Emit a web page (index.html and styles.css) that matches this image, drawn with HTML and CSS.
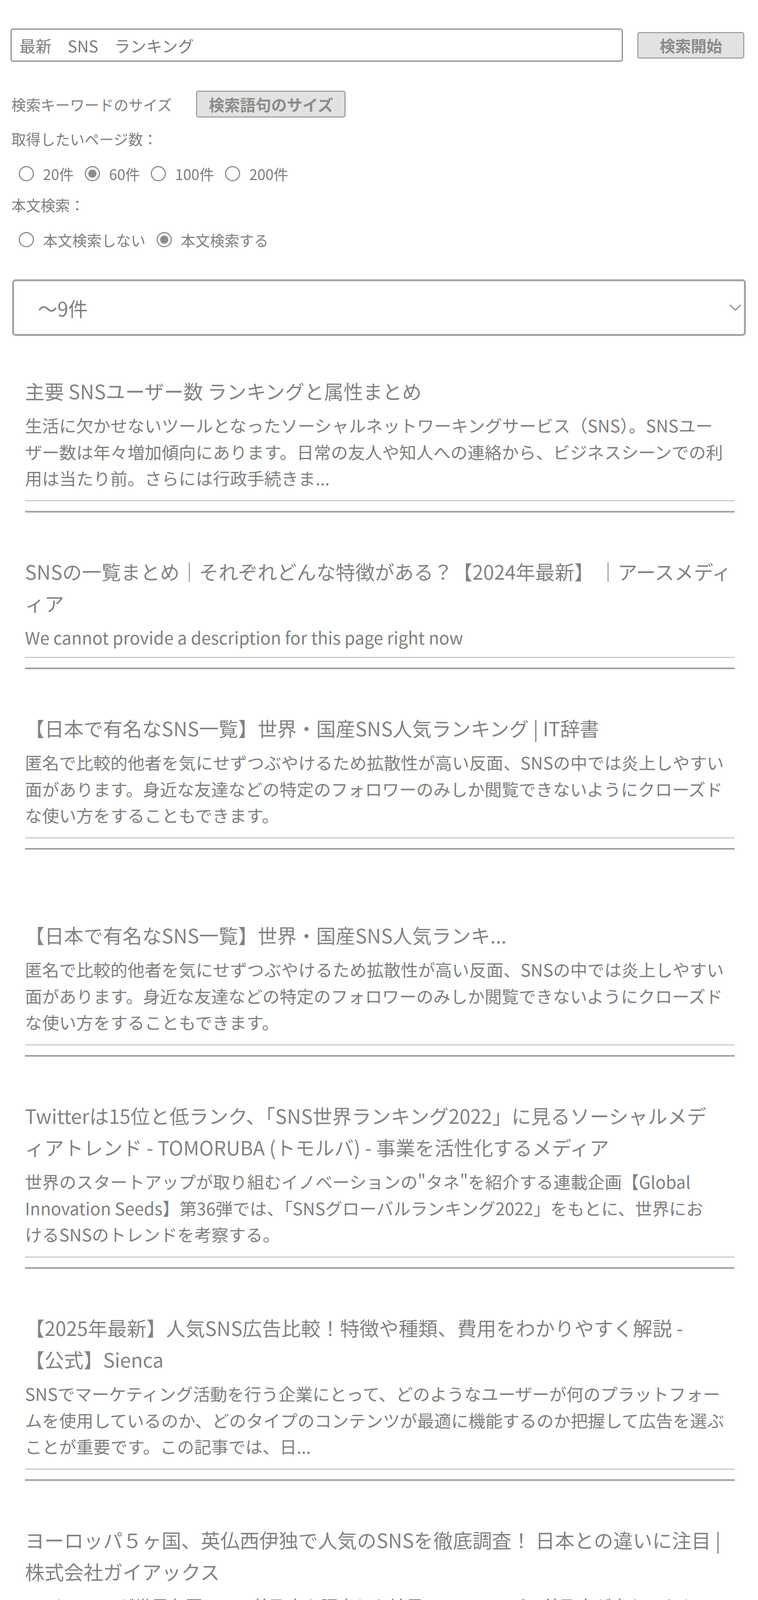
FILE: index.html
```html
<!DOCTYPE html>
<html lang="ja">
<head>
<meta charset="utf-8">
<title>SNS ランキング 検索</title>
<link rel="stylesheet" href="styles.css">
</head>
<body>
<div class="page">
  <form class="search-row">
    <input class="search-input" type="text" value="最新　SNS　ランキング">
    <button class="btn btn-search" type="button">検索開始</button>
  </form>

  <div class="size-row">
    <span class="label">検索キーワードのサイズ</span>
    <button class="btn btn-size" type="button">検索語句のサイズ</button>
  </div>

  <div class="label label-block">取得したいページ数：</div>
  <div class="radio-row">
    <label class="opt"><input class="radio" type="radio" name="count">20件</label>
    <label class="opt"><input class="radio" type="radio" name="count" checked>60件</label>
    <label class="opt"><input class="radio" type="radio" name="count">100件</label>
    <label class="opt"><input class="radio" type="radio" name="count">200件</label>
  </div>

  <div class="label label-block label-body">本文検索：</div>
  <div class="radio-row">
    <label class="opt"><input class="radio" type="radio" name="body">本文検索しない</label>
    <label class="opt"><input class="radio" type="radio" name="body" checked>本文検索する</label>
  </div>

  <div class="select">
    <span class="select-text">～9件</span>
    <svg class="chevron" width="30" height="17" viewBox="0 0 30 17"><path d="M2 2 L15 15 L28 2" fill="none" stroke="#8a8a8a" stroke-width="3" stroke-linecap="round" stroke-linejoin="round"/></svg>
  </div>

  <div class="results">
    <div class="item">
      <div class="title">主要 SNSユーザー数 ランキングと属性まとめ</div>
      <p class="desc">生活に欠かせないツールとなったソーシャルネットワーキングサービス（SNS）。SNSユー<br>ザー数は年々増加傾向にあります。日常の友人や知人への連絡から、ビジネスシーンでの利<br>用は当たり前。さらには行政手続きま...</p>
      <div class="rule"></div>
      <hr class="sep">
    </div>

    <div class="item">
      <div class="title">SNSの一覧まとめ｜それぞれどんな特徴がある？【2024年最新】 ｜アースメディ<br>ィア</div>
      <p class="desc desc-short">We cannot provide a description for this page right now</p>
      <div class="rule"></div>
      <hr class="sep">
    </div>

    <div class="item">
      <div class="title">【日本で有名なSNS一覧】世界・国産SNS人気ランキング | IT辞書</div>
      <p class="desc">匿名で比較的他者を気にせずつぶやけるため拡散性が高い反面、SNSの中では炎上しやすい<br>面があります。身近な友達などの特定のフォロワーのみしか閲覧できないようにクローズド<br>な使い方をすることもできます。</p>
      <div class="rule"></div>
      <hr class="sep">
    </div>

    <div class="item item-spaced">
      <div class="title">【日本で有名なSNS一覧】世界・国産SNS人気ランキ...</div>
      <p class="desc">匿名で比較的他者を気にせずつぶやけるため拡散性が高い反面、SNSの中では炎上しやすい<br>面があります。身近な友達などの特定のフォロワーのみしか閲覧できないようにクローズド<br>な使い方をすることもできます。</p>
      <div class="rule"></div>
      <hr class="sep">
    </div>

    <div class="item">
      <div class="title">Twitterは15位と低ランク、「SNS世界ランキング2022」に見るソーシャルメデ<br>ィアトレンド - TOMORUBA (トモルバ) - 事業を活性化するメディア</div>
      <p class="desc">世界のスタートアップが取り組むイノベーションの"タネ"を紹介する連載企画【Global<br>Innovation Seeds】第36弾では、「SNSグローバルランキング2022」をもとに、世界にお<br>けるSNSのトレンドを考察する。</p>
      <div class="rule"></div>
      <hr class="sep">
    </div>

    <div class="item">
      <div class="title">【2025年最新】人気SNS広告比較！特徴や種類、費用をわかりやすく解説 -<br>【公式】Sienca</div>
      <p class="desc">SNSでマーケティング活動を行う企業にとって、どのようなユーザーが何のプラットフォー<br>ムを使用しているのか、どのタイプのコンテンツが最適に機能するのか把握して広告を選ぶ<br>ことが重要です。この記事では、日...</p>
      <div class="rule"></div>
      <hr class="sep">
    </div>

    <div class="item">
      <div class="title">ヨーロッパ５ヶ国、英仏西伊独で人気のSNSを徹底調査！ 日本との違いに注目 |<br>株式会社ガイアックス</div>
      <p class="desc">Statista Inc.が世界各国のSNS普及率を調査した結果、ヨーロッパで普及率が高かったトッ<br>プ5はイギリスの64%、フランスの56%、スペインの54%、イタリアの52%、ドイツの41%<br>でした。 SNSの普及率が高かった5ヶ国の「ユーザー数...</p>
      <div class="rule"></div>
      <hr class="sep">
    </div>

    <div class="item">
      <div class="title">【2023年】世界で人気のソーシャルメディアまとめ | 株式会社bibin</div>
      <p class="desc">Facebookは2006年9月26日に公開されたものであり、SNSの存在を世に知らしめた存在の<br>代表的なサービスです。当時、ハーバード大学生のマーク・ザッカーバーグが友人とともに<br>創業しました。</p>
      <div class="rule"></div>
      <hr class="sep">
    </div>
  </div>
</div>
</body>
</html>
```

FILE: styles.css
```css
html {
  background: #ffffff;
}

body {
  margin: 0;
  font-family: "Noto Sans CJK JP", "Noto Sans", "Liberation Sans", sans-serif;
  color: #808080;
  background: #ffffff;
}

.page {
  padding: 0 31px 0 27px;
}

/* search row */
.search-row {
  display: flex;
  align-items: center;
  margin: 73px 0 0 0;
  height: 85px;
}

.search-input {
  box-sizing: border-box;
  width: 1568px;
  height: 85px;
  margin: 0;
  padding: 0 0 0 20px;
  border: 3px solid #8e8e8e;
  border-radius: 6px;
  font-family: "Noto Sans CJK JP", "Noto Sans", sans-serif;
  font-size: 41px;
  color: #7c7c7c;
  background: #ffffff;
  outline: none;
}

.btn {
  box-sizing: border-box;
  margin: 0;
  padding: 0;
  border: 3px solid #a2a2a2;
  border-radius: 6px;
  background: #e2e2e2;
  color: #8c8c8c;
  font-family: "Noto Sans CJK JP", "Noto Sans", sans-serif;
  font-size: 40px;
  font-weight: 700;
  line-height: 1;
}

.btn-search {
  margin-left: 37px;
  width: 274px;
  height: 68px;
}

/* size row */
.size-row {
  display: flex;
  align-items: center;
  margin-top: 74px;
  height: 69px;
}

.label {
  font-size: 37.5px;
  line-height: 45px;
  color: #808080;
  padding-left: 2px;
}

.btn-size {
  margin-left: 62px;
  width: 383px;
  height: 69px;
}

.label-block {
  display: block;
  margin-top: 31px;
}

.label-body {
  margin-top: 34px;
}

/* radios */
.radio-row {
  display: flex;
  align-items: center;
  height: 45px;
  margin-top: 45px;
  padding-left: 21px;
}

.opt {
  display: flex;
  align-items: center;
  font-size: 37.5px;
  line-height: 45px;
  margin-right: 28px;
  color: #808080;
}

.radio {
  -webkit-appearance: none;
  appearance: none;
  box-sizing: border-box;
  width: 39px;
  height: 39px;
  margin: 0 23px 0 0;
  border: 3px solid #8c8c8c;
  border-radius: 50%;
  background: #ffffff;
}

.radio:checked {
  border-color: #8c8c8c;
  background: radial-gradient(circle, #8c8c8c 0 10px, #ffffff 11px);
}

/* select */
.select {
  box-sizing: border-box;
  display: flex;
  align-items: center;
  justify-content: space-between;
  height: 145px;
  margin: 79px 0 0 4px;
  padding: 0 7px 0 61px;
  border: 5px solid #a4a4a4;
  border-radius: 9px;
}

.select-text {
  font-size: 50px;
  line-height: 60px;
  color: #808080;
}

.chevron {
  display: block;
}

/* results */
.results {
  margin: 100px 29px 0 37px;
}

.item + .item {
  margin-top: 109px;
}

.item.item-spaced {
  margin-top: 177px;
}

.title {
  font-size: 50px;
  line-height: 81px;
  margin: 0 0 14px 0;
  color: #838383;
}

.desc {
  font-size: 43.75px;
  line-height: 67.5px;
  margin: 0 0 23.5px 0;
  color: #808080;
}

.desc-short {
  margin-bottom: 16.5px;
}

.rule {
  height: 0;
  border-top: 2px solid #b3b3b3;
}

.sep {
  height: 0;
  margin: 25px 0 0 0;
  border: 0;
  border-top: 3px solid #9a9a9a;
  border-bottom: 2px solid #cdcdcd;
}
```
